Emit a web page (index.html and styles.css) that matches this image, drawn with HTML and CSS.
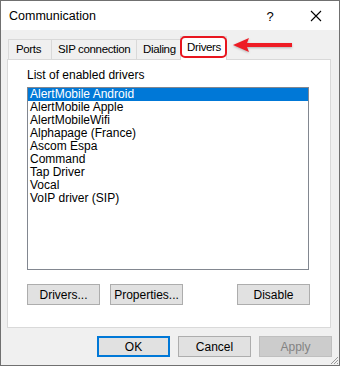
FILE: index.html
```html
<!DOCTYPE html>
<html lang="en">
<head>
  <meta charset="UTF-8" />
  <title>Communication</title>
  <link rel="stylesheet" href="styles.css">
</head>
<body>
  <div class="window">
    <div class="titlebar">
      <span class="title">Communication</span>
      <span class="help">?</span>
      <span class="close">
        <svg width="12" height="12" viewBox="0 0 12 12"><path d="M1 1 L11 11 M11 1 L1 11" stroke="#000" stroke-width="1.1" fill="none"/></svg>
      </span>
    </div>

    <div class="content">
      <div class="tabs">
        <div class="tab tab-ports">Ports</div>
        <div class="tab tab-sip">SIP connection</div>
        <div class="tab tab-dial">Dialing</div>
        <div class="tab tab-drivers active">Drivers</div>
        <div class="mark"></div>
        <svg class="arrow" width="64" height="18" viewBox="0 0 64 18">
          <path d="M1 9 L17 2 L15 7 L60 7 L60 11 L15 11 L17 16 Z" fill="#ee1c25"/>
        </svg>
      </div>

      <div class="panel">
        <div class="label">List of enabled drivers</div>
        <ul class="list">
          <li class="selected">AlertMobile Android</li>
          <li>AlertMobile Apple</li>
          <li>AlertMobileWifi</li>
          <li>Alphapage (France)</li>
          <li>Ascom Espa</li>
          <li>Command</li>
          <li>Tap Driver</li>
          <li>Vocal</li>
          <li>VoIP driver (SIP)</li>
        </ul>
        <div class="panel-buttons">
          <button class="btn">Drivers...</button>
          <button class="btn">Properties...</button>
          <span class="spacer"></span>
          <button class="btn">Disable</button>
        </div>
      </div>

      <div class="footer">
        <button class="btn default">OK</button>
        <button class="btn">Cancel</button>
        <button class="btn disabled">Apply</button>
      </div>
    </div>

    <svg class="grip" width="10" height="10" viewBox="0 0 10 10">
      <path d="M9 2 L2 9 M9 5 L5 9 M9 8 L8 9" stroke="#9a9a9a" stroke-width="1" fill="none"/>
    </svg>
  </div>
</body>
</html>
```

FILE: styles.css
```css
body {
  margin: 0;
  padding: 0;
  font-family: "Liberation Sans", Arial, sans-serif;
  font-size: 12px;
  color: #000;
  background: #fff;
}

.window {
  position: relative;
  box-sizing: border-box;
  width: 340px;
  height: 366px;
  border: 1px solid #707070;
  background: #f0f0f0;
  display: flex;
  flex-direction: column;
}

.titlebar {
  height: 29px;
  background: #fff;
  display: flex;
  align-items: center;
  flex-shrink: 0;
}

.title {
  flex: 1;
  padding-left: 8px;
  font-size: 12.5px;
  padding-top: 1px;
}

.help {
  width: 46px;
  text-align: center;
  font-size: 13px;
  padding-top: 1px;
}

.close {
  width: 46px;
  display: flex;
  justify-content: center;
  padding-top: 1px;
}

.content {
  padding: 6px 8px 0 6px;
}

.tabs {
  position: relative;
  height: 23px;
  display: flex;
  align-items: flex-end;
}

.tab {
  box-sizing: border-box;
  height: 20px;
  line-height: 19px;
  border: 1px solid #d9d9d9;
  border-bottom: none;
  border-right: none;
  background: #f0f0f0;
  padding-left: 6px;
  white-space: nowrap;
  overflow: hidden;
  font-size: 11.5px;
  letter-spacing: -0.35px;
}

.tab-ports { width: 43px; margin-left: 1px; padding-left: 7px; }
.tab-sip { width: 85px; }
.tab-dial { width: 45px; border-right: 1px solid #d9d9d9; }

.tab.active {
  position: relative;
  z-index: 2;
  width: 47px;
  height: 24px;
  margin-bottom: -1px;
  margin-left: -1px;
  background: #fff;
  border-right: 1px solid #d9d9d9;
  line-height: 20px;
  padding-left: 6px;
  padding-bottom: 2px;
}

.mark {
  position: absolute;
  z-index: 3;
  left: 173px;
  top: 0;
  width: 47px;
  height: 22px;
  box-sizing: border-box;
  border: 2px solid #e8161f;
  border-radius: 5px;
}

.arrow {
  position: absolute;
  left: 225px;
  top: 0;
  filter: drop-shadow(0 1px 1px rgba(0, 0, 0, 0.25));
}

.panel {
  box-sizing: border-box;
  height: 269px;
  background: #fff;
  border: 1px solid #d9d9d9;
  padding: 8px 0 0 19px;
}

.label {
  line-height: 14px;
  margin-bottom: 5px;
}

.list {
  box-sizing: border-box;
  list-style: none;
  margin: 0;
  padding: 0;
  width: 282px;
  height: 183px;
  border: 1px solid #828790;
  background: #fff;
}

.list li {
  height: 13px;
  line-height: 13px;
  padding-left: 2px;
  white-space: nowrap;
}

.list li.selected {
  background: #0078d7;
  color: #fff;
}

.panel-buttons {
  display: flex;
  gap: 10px;
  margin-top: 14px;
  width: 283px;
}

.spacer {
  flex: 1;
}

.btn {
  box-sizing: border-box;
  width: 73px;
  height: 21px;
  padding: 0;
  font-family: "Liberation Sans", Arial, sans-serif;
  font-size: 12px;
  color: #000;
  background: #e1e1e1;
  border: 1px solid #adadad;
  border-radius: 0;
}

.btn.default {
  border: 2px solid #0078d7;
}

.btn.disabled {
  background: #cccccc;
  border-color: #bfbfbf;
  color: #838383;
}

.footer {
  display: flex;
  justify-content: flex-end;
  gap: 8px;
  margin-top: 8px;
  margin-right: -1px;
}

.grip {
  position: absolute;
  right: 0;
  bottom: 0;
}
```
